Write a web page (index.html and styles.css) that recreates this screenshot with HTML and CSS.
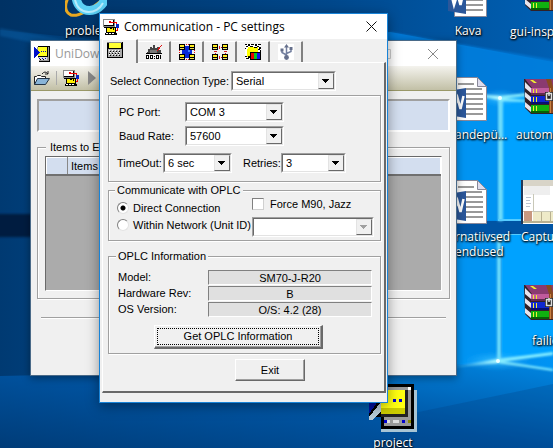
FILE: index.html
```html
<!DOCTYPE html>
<html lang="en">
<head>
<meta charset="utf-8">
<title>Communication - PC settings</title>
<link rel="stylesheet" href="styles.css">
</head>
<body>
<svg class="sprites" aria-hidden="true">
  <defs>
    <symbol id="link" viewBox="0 0 16 16">
      <path fill="#888" d="M0 0h12v8H0z"/><path fill="#fff" d="M1 1h9v5H1z"/><path fill="#000" d="M10 1h1v6H1V6h9zM1 8h5v1H1z"/>
      <path fill="#e00" d="M6 2h2v2H6zM8 3h6v1H8zM13 4h1v2h-1zM14 9h1v3h-3v-1h2z"/>
      <path fill="#0828c8" d="M13 5h3v4h-3z"/>
      <path fill="#000" d="M3 8h10v6H3zM2 14h12v2H2z"/><path fill="#fe0" d="M4 9h8v4H4z"/><path fill="#fff" d="M3 14h2v1H3zM6 14h2v1H6zM9 14h2v1H9z"/><path fill="#000" d="M7 9h2v1H7zM10 9h1v2h-1z"/>
    </symbol>
    <symbol id="plc" viewBox="0 0 16 16">
      <path fill="#999" d="M3 1h13v15H5z"/><path fill="#000" d="M4 0h12v1H4zM15 0h1v16H5v-1h10zM4 10h10v1H4z"/>
      <path fill="#ff2" d="M4 1h9v9H4z"/><path fill="#ddd" d="M5 11h8v3H5z"/>
      <path fill="#00c" d="M5 12h1v1H5zM8 12h1v1H8zM11 12h1v1h-1zM7 5h1v1H7zM9 5h1v1H9zM11 5h1v1h-1z"/>
      <path fill="#000" d="M6 13h1v1H6zM9 13h1v1H9zM13 1h1v10h-1z"/><path fill="#0010c8" d="M0 1l6 5-6 6z"/>
    </symbol>
    <symbol id="node" viewBox="0 0 6 6">
      <path fill="#000" d="M0 0h6v6H0z"/><path fill="#fe2" d="M1 1h4v2H1z"/><path fill="#ccb" d="M1 4h1v1H1zM4 4h1v1H4z"/><path fill="#fe2" d="M2 4h2v1H2z"/>
    </symbol>
    <symbol id="word" viewBox="0 0 40 44">
      <path fill="#fff" stroke="#889" d="M6.500.5h23l9 9v34h-32z"/><path fill="#dde" stroke="#889" d="M29.500.5v9h9z"/>
      <path stroke="#999" stroke-width="2" d="M10 7h16M18 12h16M18 17h17M18 22h17M18 27h17M18 32h17M18 37h17"/>
      <path fill="#2b579a" d="M0 14l18-3v30L0 38z"/><path fill="none" stroke="#fff" stroke-width="2.500" d="M3 20l3 12 3.500-11 3 11 3-13"/>
    </symbol>
    <symbol id="books" viewBox="0 0 36 36">
      <path fill="#302028" d="M0 1h36v35H7L1 30z"/>
      <path fill="#e8e4ec" d="M1 4l6 6v5l-6-5zM1 14l6 5v5l-6-5zM1 24l6 5v5l-6-5z"/>
      <path fill="#8a3a70" d="M1 1h35v9H8z"/><path fill="#c05a9c" d="M7 10h29v5H7z"/><path fill="#602850" d="M7 15h29v2H7z"/>
      <path fill="#1028d0" d="M7 18h29v6H7z"/><path fill="#081070" d="M7 24h29v2H7z"/>
      <path fill="#10b010" d="M7 27h29v6H7z"/><path fill="#066006" d="M7 33h29v2H7z"/>
      <path fill="#ee3" d="M9 11h1v4H9zM12 11h1v4h-1zM9 19h1v5H9zM12 19h1v5h-1zM9 28h1v5H9zM12 28h1v5h-1zM6 2h3l4 3h-3z"/>
      <path fill="#8a4a20" d="M22 1h5l2 8v26h-4V10z"/><path fill="#c88040" d="M26 10h1v25h-1z"/>
      <path fill="#222" d="M21 14h9v9h-9z"/><path fill="none" stroke="#ddd" stroke-width="1.500" d="M22.500 15.500h5v6h-5zM25 14v4"/>
    </symbol>
    <symbol id="arrow" viewBox="0 0 14 14"><path fill="currentColor" d="M3 5h7v1H9v1H8v1H7v1H6V8H5V7H4V6H3z"/></symbol>
  </defs>
</svg>

<main class="desktop">
  <svg class="wallpaper" viewBox="0 0 553 448" preserveAspectRatio="xMidYMid slice" aria-hidden="true">
    <defs>
      <linearGradient id="base" x1="0" x2="1"><stop offset="0" stop-color="#003a72"/><stop offset=".5" stop-color="#005aaa"/><stop offset=".82" stop-color="#0086e6"/><stop offset="1" stop-color="#0094f4"/></linearGradient>
      <linearGradient id="top" x1="0" x2="1"><stop offset="0" stop-color="#003264"/><stop offset=".6" stop-color="#00488c"/><stop offset="1" stop-color="#0060b4"/></linearGradient>
      <linearGradient id="low" x1="0" y1="1" x2="1" y2="0"><stop offset="0" stop-color="#003c78"/><stop offset=".5" stop-color="#0054a2"/><stop offset="1" stop-color="#0088e4"/></linearGradient>
      <linearGradient id="fade" x1="0" x2="1"><stop offset="0" stop-color="#4cf" stop-opacity="0"/><stop offset="1" stop-color="#bff"/></linearGradient>
      <radialGradient id="glow"><stop offset="0" stop-color="#4cf" stop-opacity=".8"/><stop offset="1" stop-color="#2af" stop-opacity="0"/></radialGradient>
      <filter id="soft"><feGaussianBlur stdDeviation="1"/></filter>
    </defs>
    <path fill="url(#base)" d="M0 0h553v448H0z"/>
    <path fill="url(#top)" d="M0 0h553v62L390 32 200 50 0 30z"/>
    <path fill="#0078d6" opacity=".8" filter="url(#soft)" d="M390 32l170 29v36l-60 2-110-22z"/>
    <path fill="#00a2ff" d="M502 98l51-5v127h-51zM502 235h51v119l-51 7z"/>
    <path fill="#0094f2" d="M440 92l56 5v123h-56zM440 235h56v126l-56 5z"/>
    <path fill="#0054a4" d="M440 221h113v13H440z"/>
    <path fill="#001c40" filter="url(#soft)" d="M-5 214h120v23H-5z"/>
    <path fill="url(#low)" d="M0 376l456-10 44-5 53 10v77H0z"/>
    <path fill="#003c7c" opacity=".25" d="M390 418l163-34v64H390z"/>
    <path fill="#1c90e8" opacity=".2" filter="url(#soft)" d="M0 28l110 20v10L0 36z"/>
    <g filter="url(#soft)">
      <ellipse cx="500" cy="98" rx="22" ry="9" fill="url(#glow)"/><ellipse cx="497" cy="361" rx="35" ry="10" fill="url(#glow)"/>
      <path fill="#6cdcfc" d="M498 96h5v125h-5zM497 235h4v127h-4z"/>
      <path fill="url(#fade)" d="M440 90l60 6v4zM440 369l58-10v4z"/>
      <path fill="#8ef" d="M500 96l53-6v3l-53 6zM498 359l55-7v3l-53 7zM500 361l53 8v2l-55-8zM500 98l53 4v1l-53-2z"/>
    </g>
    <path fill="#5cf" d="M498 219h25v2h-25zM498 234h23v1h-23z"/>
    <circle cx="500" cy="98" r="2" fill="#eff"/><circle cx="498" cy="361" r="2" fill="#eff"/>
  </svg>

  <div class="item ie"><svg class="pic-ie" viewBox="0 0 42 20"><path fill="none" stroke="#e8a820" stroke-width="3" d="M5-6C-1 4-1 12 6 15c7 2 20-6 30-14"/><path fill="none" stroke="#5cd0f4" stroke-width="9" d="M11-3c2 18 24 18 30 0"/><path fill="none" stroke="#b8ecfc" stroke-width="2" d="M10 0c4 16 22 15 28 3"/></svg><span>problem</span></div>
  <div class="item kava"><svg class="pic-word"><use href="#word"/></svg><span>Kava</span></div>
  <div class="item doc-a"><svg class="pic-word"><use href="#word"/></svg><span>andepü...</span></div>
  <div class="item doc-b"><svg class="pic-word"><use href="#word"/></svg><span>rnatiivsed<br>endused</span></div>
  <div class="item rar-a"><svg class="pic-books"><use href="#books"/></svg><span>gui-insp</span></div>
  <div class="item rar-b"><svg class="pic-books"><use href="#books"/></svg><span>automa</span></div>
  <div class="item shot"><svg class="pic-shot" viewBox="0 0 36 44"><path fill="#203858" d="M0 0h36v44H0z"/><path fill="#fff" d="M2 0h34v44H2z"/><path fill="#d8d4c8" d="M2 0h34v6H2z"/><path fill="#eee" d="M3 6h26v9H3z"/><path fill="#c8c8b8" d="M12 14h1v18h-1zM2 31h34v1H2z"/><path fill="#eeeac8" d="M12 32h24v10H12z"/><path fill="#c89880" d="M3 31h8v10H3z"/><path fill="#bcc4d0" d="M5 17h5v1H5zM5 20h4v1H5zM5 23h5v1H5zM5 26h4v1H5z"/><path fill="#b8b090" d="M2 41h34v2H2zM20 32h1v9h-1zM29 32h1v9h-1z"/></svg><span>Captu</span></div>
  <div class="item rar-c"><svg class="pic-books"><use href="#books"/></svg><span>failie</span></div>
  <div class="item project"><svg class="pic-project" viewBox="0 0 16 16" shape-rendering="crispEdges"><path fill="#a8c4d4" d="M4 2h12v14H4z"/><path fill="#000" d="M0 0h15v15H4v-4H0z"/><path fill="#999" d="M3 1h11v13H5V1z"/><path fill="#fff" d="M13 1h1v1h-1z"/><path fill="#222" d="M12 2h1v9H4v-1h8z"/><path fill="#ff1" d="M4 2h8v8H4z"/><path fill="#cc0" d="M4 8h8v2H4z"/><path fill="#00c" d="M8 5h1v1H8zM10 5h1v1h-1zM5 12h1v1H5zM11 12h1v1h-1z"/><path fill="#ddd" d="M6 12h1v1H6zM8 12h2v1H8z"/><path fill="#880" d="M13 12h1v1h-1z"/><path fill="#0010a0" d="M0 3h5L0 10z"/><path fill="#b8ccd8" d="M0 12v-1l4-5v3L1 12z"/></svg><span>project</span></div>

  <section class="window back" aria-label="UniDownloader">
    <header class="titlebar"><svg class="i16" shape-rendering="crispEdges"><use href="#plc"/></svg><h2>UniDownloader</h2>
      <svg class="sys" viewBox="0 0 60 12" aria-hidden="true"><path fill="none" stroke="#ccc" d="M1.500 1.500h10v9h-10z"/><path stroke="#888" d="M49 1l10 10M59 1L49 11"/></svg>
    </header>
    <div class="toolbar">
      <svg class="i16" viewBox="0 0 16 16"><path fill="#fff" stroke="#222" d="M.5 14.500v-8h2l1-1h3l1 1h4v2"/><path fill="#88b4d8" stroke="#234" d="M.5 14.500l3-6h12l-4 6z"/><path fill="none" stroke="#222" d="M8 4q3-4 6 0M14 1v3h-3"/></svg>
      <i></i>
      <svg class="i16" shape-rendering="crispEdges"><use href="#link"/></svg>
      <svg class="i16" viewBox="0 0 16 16"><path fill="#888" d="M3 1l8 7-8 7z"/></svg>
    </div>
    <div class="back-body">
      <div class="banner"></div>
      <fieldset class="group items">
        <legend>Items to Export</legend>
        <div class="list"><table><thead><tr><th class="mark"></th><th>Items</th></tr></thead></table></div>
      </fieldset>
      <hr>
    </div>
  </section>

  <form class="window dialog" aria-labelledby="dialog-title">
    <header class="titlebar"><svg class="i16" shape-rendering="crispEdges"><use href="#link"/></svg><h1 id="dialog-title">Communication - PC settings</h1>
      <button type="button" class="close" aria-label="Close"><svg viewBox="0 0 11 11"><path stroke="#111" d="M.5.5l10 10M10.500.5l-10 10"/></svg></button>
    </header>
    <div class="tabs" role="tablist">
      <button type="button" class="tab on" role="tab" aria-selected="true" aria-label="Serial"><svg class="i16" viewBox="0 0 16 16" shape-rendering="crispEdges"><path fill="#000" d="M0 0h16v16H0z"/><path fill="#888" d="M0 0h15v1H0z"/><path fill="#ff3" d="M2 1h12v5H2z"/><path fill="#aaa" d="M1 7h14v8H1z"/><path fill="#fff" d="M2 8h1v1H2zM5 8h1v1H5zM8 8h1v1H8zM11 8h1v1h-1zM3 10h1v1H3zM6 10h1v1H6zM9 10h1v1H9zM12 10h1v1h-1zM2 12h1v1H2zM5 12h1v1H5zM8 12h1v1H8zM11 12h1v1h-1z"/><path fill="#000" d="M3 9h1v1H3zM6 9h1v1H6zM9 9h1v1H9zM12 9h1v1h-1zM2 11h1v1H2zM5 11h1v1H5zM8 11h1v1H8zM11 11h1v1h-1zM3 13h1v1H3zM6 13h1v1H6zM9 13h1v1H9zM12 13h1v1h-1z"/></svg></button>
      <button type="button" class="tab" role="tab" aria-label="Modem"><svg class="i16" viewBox="0 0 16 16" shape-rendering="crispEdges"><path fill="#444" d="M1 8h1V5h2V3h2v1h1V1h2v3h2V3h2v3h2v3H1z"/><path fill="#777" d="M4 6h7v3H4z"/><path fill="#e01010" d="M15 1h1v1h-1zM14 2h1v1h-1zM13 3h1v2h-1zM12 4h1v2h-1zM11 6h1v1h-1z"/><path fill="#000" d="M0 9h16v1H0zM0 11h3v4H0zM4 11h3v4H4zM8 12h1v1H8zM8 14h1v1H8zM10 11h3v4h-3zM14 11h1v4h-1z"/><path fill="#fff" d="M1 12h1v2H1zM5 12h1v2H5zM11 12h1v2h-1z"/></svg></button>
      <button type="button" class="tab" role="tab" aria-label="Ethernet"><svg class="i16" viewBox="0 0 16 16" shape-rendering="crispEdges"><path fill="none" stroke="#e01010" stroke-dasharray="1 1" d="M.5.5h15v15H.5z"/><path fill="#0828d8" d="M3 4h10v9H3zM6 2h4v12H6z"/><path fill="#4080ff" d="M9 6h2v2H9z"/><use href="#node" width="6" height="6"/><use href="#node" x="10" width="6" height="6"/><use href="#node" y="10" width="6" height="6"/><use href="#node" x="10" y="10" width="6" height="6"/></svg></button>
      <button type="button" class="tab" role="tab" aria-label="Network"><svg class="i16" viewBox="0 0 16 16" shape-rendering="crispEdges"><path fill="#d02020" d="M7 2h1v3H7zM9 3h1v1H9zM2 7h3v1H2zM3 9h1v1H3zM12 7h3v1h-3zM13 9h1v1h-1zM7 12h1v3H7zM9 13h1v1H9z"/><use href="#node" width="6" height="6"/><use href="#node" x="10" width="6" height="6"/><use href="#node" y="10" width="6" height="6"/><use href="#node" x="10" y="10" width="6" height="6"/></svg></button>
      <button type="button" class="tab" role="tab" aria-label="Display"><svg class="i16" viewBox="0 0 16 16" shape-rendering="crispEdges"><path fill="#fff" d="M0 0h16v16H0z"/><path fill="#ff0" d="M3 3h10v10H2V5h1z"/><path fill="#000" d="M0 0h2v1H0zM3 0h2v2H3zM6 0h3v1H6zM10 0h2v2h-2zM13 0h3v1h-3zM1 2h2v1H1zM5 2h3v1H5zM9 3h3v1H9zM12 2h2v1h-2zM14 3h2v2h-2zM13 5h2v1h-2zM0 4h1v1H0zM0 12h2v1H0zM1 14h3v1H1zM3 12h2v2H3zM15 6h1v2h-1zM5 8h11v8H5z"/><path fill="#e00" d="M6 9h3v6H6z"/><path fill="#0c2" d="M9 9h3v6H9z"/><path fill="#11e" d="M12 9h3v6h-3z"/></svg></button>
      <button type="button" class="tab" role="tab" aria-label="USB"><svg class="i16" viewBox="0 0 16 16"><path fill="#fff" d="M0 0h16v16H0z"/><path fill="none" stroke="#7480a0" stroke-width="1.500" d="M8.500 14V2M8.500 11L4 8.500V6M8.500 9.500L13 7.500V4"/><path fill="#66708c" d="M8.500 0l2.500 3.500H6zM2.500 4.500h3v3h-3zM11.500 3h3v3h-3z"/><circle cx="8.500" cy="13.500" r="2.400" fill="#66708c"/></svg></button>
    </div>
    <div class="page">
      <div class="row type"><label for="type">Select Connection Type:</label><span class="combo w-type"><select id="type"><option>Serial</option></select><svg><use href="#arrow"/></svg></span></div>

      <fieldset class="group port">
        <div class="row wide"><label for="port">PC Port:</label><span class="combo w-port"><select id="port"><option>COM 3</option></select><svg><use href="#arrow"/></svg></span></div>
        <div class="row wide"><label for="baud">Baud Rate:</label><span class="combo w-port"><select id="baud"><option>57600</option></select><svg><use href="#arrow"/></svg></span></div>
        <div class="row times"><label for="time">TimeOut:</label><span class="combo w-time"><select id="time"><option>6 sec</option></select><svg><use href="#arrow"/></svg></span>
          <label for="retry" class="retry">Retries:</label><span class="combo w-retry"><select id="retry"><option>3</option></select><svg><use href="#arrow"/></svg></span></div>
      </fieldset>

      <fieldset class="group target">
        <legend>Communicate with OPLC</legend>
        <div class="target-grid">
          <div class="radios">
            <label><input type="radio" name="mode" checked>Direct Connection</label>
            <label><input type="radio" name="mode">Within Network (Unit ID)</label>
          </div>
          <div class="extras">
            <label><input type="checkbox">Force M90, Jazz</label>
            <span class="combo off"><select disabled aria-label="Unit ID"></select><svg><use href="#arrow"/></svg></span>
          </div>
        </div>
      </fieldset>

      <fieldset class="group info">
        <legend>OPLC Information</legend>
        <dl>
          <dt>Model:</dt><dd>SM70-J-R20</dd>
          <dt>Hardware Rev:</dt><dd>B</dd>
          <dt>OS Version:</dt><dd>O/S: 4.2 (28)</dd>
        </dl>
        <button type="button" class="push get"><span>Get OPLC Information</span></button>
      </fieldset>
      <button type="button" class="push exit">Exit</button>
    </div>
  </form>
</main>
</body>
</html>
```

FILE: styles.css
```css
* { box-sizing: border-box; }
body { margin: 0; font: 11px/14px "Liberation Sans", Arial, sans-serif; color: #000; }
h1, h2, dl, dd, fieldset { margin: 0; padding: 0; }
button, select { font: inherit; color: inherit; }
svg { display: block; flex: none; }
.sprites { position: absolute; width: 0; height: 0; }
.i16 { width: 16px; height: 16px; }

.desktop { position: relative; height: 100vh; overflow: hidden; background: #005aaa; }
.wallpaper { position: absolute; inset: 0; width: 100%; height: 100%; }

/* Desktop icons */
.item { position: absolute; display: flex; flex-direction: column; gap: 3px; white-space: nowrap; color: #fff; font: 12px/15px "Open Sans", "Noto Sans", sans-serif; text-shadow: 1px 1px 2px #000, 0 1px 2px #000; }
.pic-ie { width: 42px; height: 20px; }
.pic-word { width: 40px; height: 44px; }
.pic-books { width: 36px; height: 36px; }
.pic-shot { width: 36px; height: 44px; }
.pic-project { width: 48px; height: 48px; }
.ie { left: 65px; top: 0; }
.kava { left: 448px; top: -27px; gap: 6px; align-items: center; }
.doc-a { left: 448px; top: 77px; gap: 6px; }
.doc-a span, .doc-b span { padding-left: 7px; }
.doc-b { left: 448px; top: 180px; gap: 5px; }
.rar-a { left: 510px; top: -25px; gap: 13px; }
.rar-b { left: 516px; top: 78px; gap: 13px; }
.rar-c { left: 524px; top: 284px; gap: 13px; }
.rar-a svg { margin-left: 14px; }
.rar-b svg { margin-left: 8px; }
.rar-c span { padding-left: 8px; }
.shot { left: 521px; top: 180px; gap: 5px; }
.project { left: 369px; top: 384px; align-items: center; }

/* Windows */
.window { position: absolute; background: #f0f0f0; }
.titlebar { display: flex; align-items: center; height: 25px; padding: 0 3px; gap: 5px; background: #fff; }
.titlebar h1, .titlebar h2 { flex: 1; font: 12px/16px "Open Sans", "Noto Sans", sans-serif; }
.back { left: 30px; top: 40px; width: 427px; height: 336px; border: 1px solid #4a6a88; box-shadow: 0 2px 8px rgba(0, 0, 0, .4); }
.back h2 { color: #999; }
.sys { width: 60px; height: 12px; margin-right: 14px; }
.toolbar { display: flex; align-items: center; gap: 6px; height: 25px; padding: 0 3px; background: linear-gradient(#f4f3ee, #c2c0a6); border-bottom: 1px solid #9a9868; }
.toolbar i { width: 1px; height: 14px; background: #aaa; }
.back-body { padding: 8px 6px; }
.banner { height: 33px; background: #d3deef; border: 2px solid #a0a0a0; border-right-color: #fff; border-bottom-color: #fff; }
.group { min-width: 0; border: 1px solid #a0a0a0; box-shadow: 1px 1px #fff, inset 1px 1px #fff; }
.group legend { margin-left: 8px; padding: 0 2px; background: #f0f0f0; }
.items { margin-top: 8px; padding: 2px 7px 7px; }
.items legend { margin-left: 1px; padding: 0 4px; }
.list { height: 135px; background: #ababab; border: 1px solid #696969; border-right-color: #fff; border-bottom-color: #fff; }
.list table { width: 100%; border-collapse: collapse; }
.list th { height: 17px; padding: 0 3px; text-align: left; font-weight: normal; background: #d3deef; border: 1px solid #fff; border-bottom: 2px solid #707070; }
.list .mark { width: 21px; border-right-color: #888; }
.back hr { margin: 18px 4px 0; border: 0; border-top: 1px solid #a0a0a0; border-bottom: 1px solid #fff; }

/* Dialog */
.dialog { left: 99px; top: 13px; width: 289px; padding-bottom: 9px; border: 1px solid #1883d7; box-shadow: 0 3px 12px rgba(0, 0, 0, .4); }
.dialog label { white-space: nowrap; }
.dialog .titlebar { padding-right: 10px; }
.close { width: 11px; height: 11px; padding: 0; border: 0; background: none; }
.close svg { width: 11px; height: 11px; }
.tabs { display: flex; align-items: flex-end; height: 23px; padding-left: 2px; }
.tab { display: flex; justify-content: center; width: 33px; height: 21px; padding: 2px 0 0; background: #f0f0f0; border: 0 solid #808080; border-top: 1px solid #fff; border-right-width: 2px; border-radius: 1px 1px 0 0; }
.tab.on { position: relative; z-index: 1; justify-content: flex-start; width: 36px; height: 24px; margin-bottom: -1px; padding-left: 4px; border-left: 1px solid #fff; }
.page { display: flex; flex-direction: column; margin: 0 1px 0 2px; padding: 8px 3px 10px 5px; border: 1px solid #fff; border-right: 2px solid #696969; border-bottom: 2px solid #696969; }
.row { display: flex; align-items: center; }
.type { gap: 4px; padding-left: 2px; }
.type label { width: 117px; }
.combo { position: relative; display: block; flex: none; height: 20px; border: 1px solid; border-color: #a0a0a0 #fff #fff #a0a0a0; }
.combo select { display: block; width: 100%; height: 18px; padding: 0 16px 0 3px; appearance: none; border: 1px solid; border-color: #696969 #e3e3e3 #e3e3e3 #696969; border-radius: 0; background: #fff; opacity: 1; }
.combo svg { position: absolute; right: 1px; top: 1px; width: 16px; height: 16px; pointer-events: none; background: #f0f0f0; border: 1px solid; border-color: #e3e3e3 #696969 #696969 #e3e3e3; }
.off svg { color: #a0a0a0; }
.w-type { width: 105px; }
.w-port { width: 99px; }
.w-time { width: 69px; }
.w-retry { width: 65px; }
.port { margin-top: 4px; padding: 6px 8px 8px; }
.wide { margin-bottom: 4px; padding-left: 2px; }
.wide label { width: 66px; }
.times { padding-top: 3px; }
.times label { width: 46px; }
.times .retry { width: 38px; margin-left: 11px; }
.target { margin-top: 1px; padding: 0 6px 3px 8px; }
.target legend, .info legend { margin-left: -2px; }
.target-grid { display: flex; }
.radios { display: flex; flex-direction: column; gap: 3px; width: 135px; padding-top: 4px; }
.radios label, .extras label { display: flex; align-items: center; height: 14px; }
.extras { display: flex; flex: 1; flex-direction: column; gap: 6px; }
input { flex: none; width: 12px; height: 12px; margin: 0 4px 0 0; appearance: none; background: #fff; border: 1px solid; border-color: #808080 #e3e3e3 #e3e3e3 #808080; }
input[type=radio] { border-radius: 50%; }
input[type=radio]:checked { background: radial-gradient(circle, #000 2px, #fff 3px); }
input[type=checkbox] { margin-right: 6px; border-color: #808080 #d0d0d0 #d0d0d0 #808080; }
.info { margin-top: 8px; padding: 7px 8px 4px 9px; }
.info dl { display: grid; grid-template-columns: 90px 1fr; row-gap: 1px; line-height: 15px; }
.info dd { height: 15px; line-height: 14px; text-align: center; background: #e0e0e0; border: 1px solid; border-color: #808080 #fff #fff #808080; }
.push { display: block; padding: 0; text-align: center; background: #f0f0f0; border: 1px solid; border-color: #fff #696969 #696969 #fff; box-shadow: inset -1px -1px #a0a0a0; }
.get { width: 169px; height: 24px; margin: 8px 0 0 36px; padding: 2px; border-width: 1px 2px 2px 1px; }
.get span { display: block; line-height: 15px; border: 1px dotted #000; }
.exit { width: 70px; height: 22px; margin: 5px 0 0 127px; }
```
